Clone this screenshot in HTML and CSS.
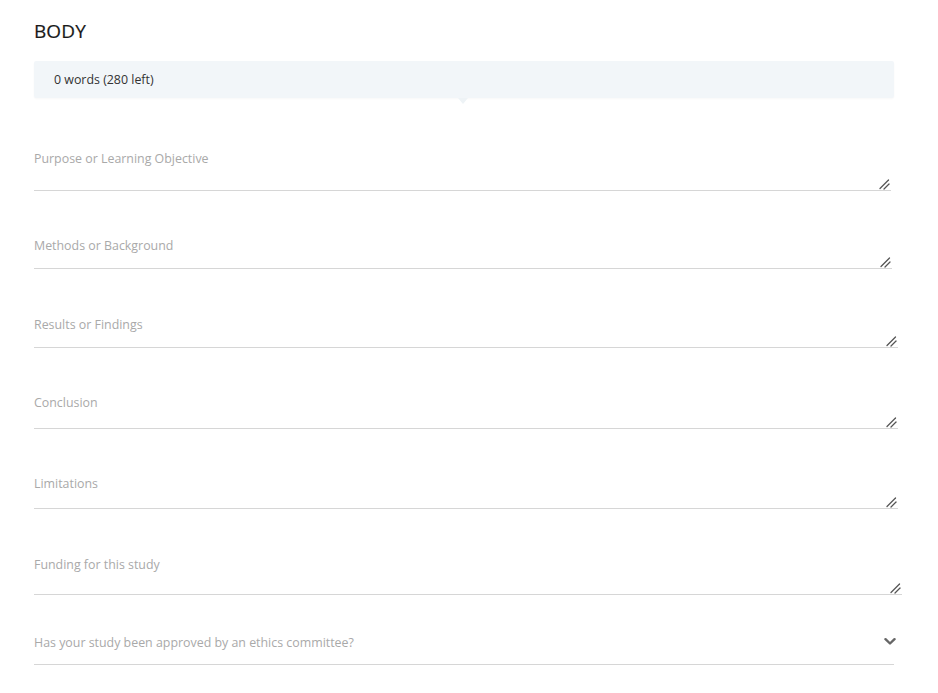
FILE: index.html
```html
<!DOCTYPE html>
<html lang="en">
<head>
<meta charset="utf-8">
<title>Body</title>
<link rel="stylesheet" href="styles.css">
</head>
<body>
<main class="form">
  <h2 class="section-title">BODY</h2>
  <div class="word-count">0 words (280 left)</div>

  <textarea class="field field-purpose" placeholder="Purpose or Learning Objective"></textarea>
  <textarea class="field field-methods" placeholder="Methods or Background"></textarea>
  <textarea class="field field-results" placeholder="Results or Findings"></textarea>
  <textarea class="field field-conclusion" placeholder="Conclusion"></textarea>
  <textarea class="field field-limitations" placeholder="Limitations"></textarea>
  <textarea class="field field-funding" placeholder="Funding for this study"></textarea>

  <div class="select">
    <span class="select-label">Has your study been approved by an ethics committee?</span>
    <svg class="chevron" width="12" height="9" viewBox="0 0 12 9" aria-hidden="true">
      <path d="M1.5 2.2 L6 6.5 L10.5 2.2" fill="none" stroke="#666" stroke-width="2.4" stroke-linecap="round" stroke-linejoin="round"/>
    </svg>
  </div>
</main>
</body>
</html>
```

FILE: styles.css
```css
* { box-sizing: border-box; }

html, body {
  margin: 0;
  padding: 0;
  background: #ffffff;
}

body {
  font-family: "Open Sans", "Noto Sans", "Liberation Sans", sans-serif;
  color: #333;
}

.form {
  padding: 20px 0 0 34px;
  width: 938px;
}

.section-title {
  margin: 0;
  font-size: 19px;
  line-height: 22px;
  font-weight: 500;
  color: #1a1a1a;
  letter-spacing: 0.1px;
  -webkit-text-stroke: 0.2px #1a1a1a;
}

.word-count {
  position: relative;
  margin-top: 19px;
  width: 860px;
  height: 37px;
  padding: 0 20px;
  background: #f2f6f9;
  font-size: 12.4px;
  line-height: 37px;
  color: #333;
  border-radius: 2px;
  box-shadow: 0 1px 2px rgba(0, 0, 0, 0.03);
}

.word-count::after {
  content: "";
  position: absolute;
  left: 424px;
  bottom: -6px;
  border-left: 5px solid transparent;
  border-right: 5px solid transparent;
  border-top: 6px solid #eef3f6;
}

.field {
  display: block;
  margin: 44px 0 0 0;
  padding: 1px 0 0 0;
  border: 0;
  border-bottom: 1px solid #d6d6d6;
  border-radius: 0;
  background: transparent;
  font-family: inherit;
  font-size: 12.4px;
  line-height: 20px;
  color: #333;
  resize: vertical;
  outline: none;
}

.field::placeholder {
  color: #a9a9a9;
  opacity: 1;
}

.field::-webkit-resizer {
  background-color: transparent;
  background-image: url("data:image/svg+xml,%3Csvg xmlns='http://www.w3.org/2000/svg' width='14' height='14' viewBox='0 0 14 14'%3E%3Cpath d='M3 12.5 L11.5 4' stroke='%23555' stroke-width='1.3' stroke-linecap='round'/%3E%3Cpath d='M7 13 L12 8' stroke='%23555' stroke-width='1.3' stroke-linecap='round'/%3E%3C/svg%3E");
  background-repeat: no-repeat;
  background-position: right bottom;
}

.field-purpose { margin-top: 50px; width: 857px; height: 43px; }
.field-methods { width: 858px; height: 34px; }
.field-results { margin-top: 45px; width: 864px; height: 34px; }
.field-conclusion { width: 864px; height: 37px; }
.field-limitations { width: 864px; height: 36px; }
.field-funding { margin-top: 45px; width: 868px; height: 41px; }

.select {
  display: flex;
  align-items: flex-start;
  justify-content: space-between;
  margin-top: 37px;
  width: 860px;
  height: 33px;
  padding: 1px 0 0 0;
  border-bottom: 1px solid #d6d6d6;
}

.select-label {
  font-size: 12.4px;
  line-height: 20px;
  color: #a9a9a9;
}

.chevron {
  margin: 4px -2px 0 0;
}
```
